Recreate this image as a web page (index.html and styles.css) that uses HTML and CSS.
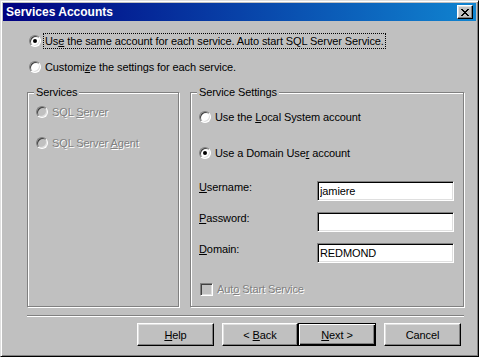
FILE: index.html
```html
<!DOCTYPE html>
<html lang="en">

<head>
    <meta charset="UTF-8">
    <meta name="viewport" content="width=device-width, initial-scale=1.0">
    <title>Services Accounts</title>
    <link rel="stylesheet" href="styles.css">
</head>

<body>
    <div class="window">
        <div class="titlebar">
            <span class="title">Services Accounts</span>
            <span class="close-btn">
                <svg width="8" height="7" viewBox="0 0 8 7" shape-rendering="crispEdges">
                    <path d="M0 0h2v1h-2zM6 0h2v1h-2zM1 1h2v1h-2zM5 1h2v1h-2zM2 2h4v1h-4zM3 3h2v1h-2zM2 4h4v1h-4zM1 5h2v1h-2zM5 5h2v1h-2zM0 6h2v1h-2zM6 6h2v1h-2z" fill="#000" />
                </svg>
            </span>
        </div>

        <div class="choices">
            <label class="option">
                <span class="radio checked"></span>
                <span class="option-text focused">Us<u>e</u> the same account for each service. Auto start SQL Server Service.</span>
            </label>
            <label class="option">
                <span class="radio"></span>
                <span class="option-text">Customi<u>z</u>e the settings for each service.</span>
            </label>
        </div>

        <div class="groups">
            <!-- 왼쪽 그룹 : 비활성 -->
            <div class="group group-services">
                <span class="group-title">Services</span>
                <div class="services-options">
                    <label class="option disabled">
                        <span class="radio"></span>
                        <span class="option-text">SQL <u>S</u>erver</span>
                    </label>
                    <label class="option disabled">
                        <span class="radio"></span>
                        <span class="option-text">SQL Server <u>A</u>gent</span>
                    </label>
                </div>
            </div>

            <!-- 오른쪽 그룹 -->
            <div class="group group-settings">
                <span class="group-title">Service Settings</span>
                <label class="option option-local">
                    <span class="radio"></span>
                    <span class="option-text">Use the <u>L</u>ocal System account</span>
                </label>
                <label class="option option-domain">
                    <span class="radio checked"></span>
                    <span class="option-text">Use a Domain Use<u>r</u> account</span>
                </label>

                <div class="fields">
                    <div class="field">
                        <span class="field-label"><u>U</u>sername:</span>
                        <input class="field-input" type="text" value="jamiere">
                    </div>
                    <div class="field">
                        <span class="field-label"><u>P</u>assword:</span>
                        <input class="field-input" type="password" value="">
                    </div>
                    <div class="field">
                        <span class="field-label"><u>D</u>omain:</span>
                        <input class="field-input" type="text" value="REDMOND">
                    </div>
                </div>

                <label class="option check-row disabled">
                    <span class="checkbox"></span>
                    <span class="check-text">Aut<u>o</u> Start Service</span>
                </label>
            </div>
        </div>

        <div class="separator"></div>

        <div class="buttons">
            <button class="btn btn-help"><u>H</u>elp</button>
            <button class="btn btn-back">&lt; <u>B</u>ack</button>
            <button class="btn btn-next"><u>N</u>ext &gt;</button>
            <button class="btn btn-cancel">Cancel</button>
        </div>
    </div>
</body>

</html>
```

FILE: styles.css
```css
* {
    margin: 0;
    padding: 0;
    box-sizing: border-box;
}

body {
    background: #c0c0c0;
}

.window {
    width: 479px;
    height: 357px;
    display: flex;
    flex-direction: column;
    padding: 2px;
    background: #c0c0c0;
    border: 1px solid;
    border-color: #dfdfdf #000 #000 #dfdfdf;
    box-shadow: inset 1px 1px #fff, inset -1px -1px #808080;
    font-family: "Liberation Sans", Arial, sans-serif;
    font-size: 11px;
    letter-spacing: -0.1px;
    color: #000;
}

/* 타이틀바 */
.titlebar {
    height: 18px;
    display: flex;
    align-items: center;
    justify-content: space-between;
    padding: 0 3px 0 3px;
    background: linear-gradient(to right, #000080, #1084d0);
    color: #fff;
    font-weight: bold;
    font-size: 12px;
    letter-spacing: 0;
}

.close-btn {
    width: 16px;
    height: 14px;
    display: flex;
    align-items: center;
    justify-content: center;
    background: #c0c0c0;
    border: 1px solid;
    border-color: #fff #000 #000 #fff;
    box-shadow: inset -1px -1px #808080, inset 1px 1px #dfdfdf;
}

.close-btn svg {
    display: block;
}

/* 라디오 옵션 */
.choices {
    display: flex;
    flex-direction: column;
    gap: 8px;
    padding: 11px 0 0 26px;
}

.option {
    height: 18px;
    display: flex;
    align-items: center;
}

.radio {
    position: relative;
    flex-shrink: 0;
    width: 12px;
    height: 12px;
    border-radius: 50%;
    background: #fff;
    border: 1px solid;
    border-color: #808080 #fff #fff #808080;
    box-shadow: inset 1px 1px #404040, inset -1px -1px #dfdfdf;
}

.radio.checked::after {
    content: "";
    position: absolute;
    left: 3px;
    top: 3px;
    width: 4px;
    height: 4px;
    border-radius: 50%;
    background: #000;
}

.option-text {
    margin-left: 2px;
    padding: 0 1px;
    line-height: 14px;
    border: 1px dotted transparent;
    white-space: nowrap;
}

.option-text.focused {
    border-color: #000;
}

.disabled .radio,
.disabled .checkbox {
    background: #c0c0c0;
}

.disabled .option-text,
.disabled .check-text {
    color: #808080;
    text-shadow: 1px 1px 0 #fff;
}

/* 그룹 박스 */
.groups {
    height: 215px;
    display: flex;
    gap: 11px;
    margin: 16px 0 0 24px;
}

.group {
    display: flex;
    flex-direction: column;
    padding: 0 8px;
    border: 1px solid #808080;
    box-shadow: 1px 1px 0 #fff, inset 1px 1px 0 #fff;
}

.group-services {
    width: 152px;
}

.group-settings {
    width: 274px;
}

.group-title {
    align-self: flex-start;
    margin: -7px 0 0 -2px;
    padding: 0 2px;
    line-height: 13px;
    background: #c0c0c0;
}

.services-options {
    display: flex;
    flex-direction: column;
    gap: 13px;
    padding-top: 4px;
}

.option-local {
    margin-top: 9px;
}

.option-domain {
    margin-top: 18px;
}

/* 입력 필드 */
.fields {
    display: flex;
    flex-direction: column;
    gap: 11px;
    margin-top: 19px;
}

.field {
    height: 20px;
    display: flex;
}

.field-label {
    width: 118px;
    line-height: 13px;
}

.field-input {
    width: 137px;
    height: 20px;
    padding: 0 2px;
    font: inherit;
    letter-spacing: inherit;
    color: #000;
    background: #fff;
    border: 1px solid;
    border-color: #808080 #fff #fff #808080;
    box-shadow: inset 1px 1px #000, inset -1px -1px #dfdfdf;
    outline: none;
}

.check-row {
    margin-top: 17px;
}

.checkbox {
    flex-shrink: 0;
    width: 13px;
    height: 13px;
    margin-left: 1px;
    border: 1px solid;
    border-color: #808080 #fff #fff #808080;
    box-shadow: inset 1px 1px #404040, inset -1px -1px #dfdfdf;
}

.check-text {
    margin-left: 4px;
    white-space: nowrap;
}

/* 하단 */
.separator {
    margin: 8px 12px 0 24px;
    border-top: 1px solid #808080;
    border-bottom: 1px solid #fff;
}

.buttons {
    display: flex;
    justify-content: flex-end;
    margin-top: 6px;
    padding-right: 15px;
}

.btn {
    width: 77px;
    height: 23px;
    font: inherit;
    letter-spacing: inherit;
    color: #000;
    background: #c0c0c0;
    border: 1px solid;
    border-color: #fff #000 #000 #fff;
    box-shadow: inset -1px -1px #808080, inset 1px 1px #dfdfdf;
}

.btn-help {
    margin-right: 8px;
}

.btn-back {
    width: 76px;
}

.btn-next {
    width: 78px;
    margin-right: 8px;
    border-color: #000;
    box-shadow: inset 1px 1px #fff, inset -1px -1px #000, inset -2px -2px #808080;
}
```
